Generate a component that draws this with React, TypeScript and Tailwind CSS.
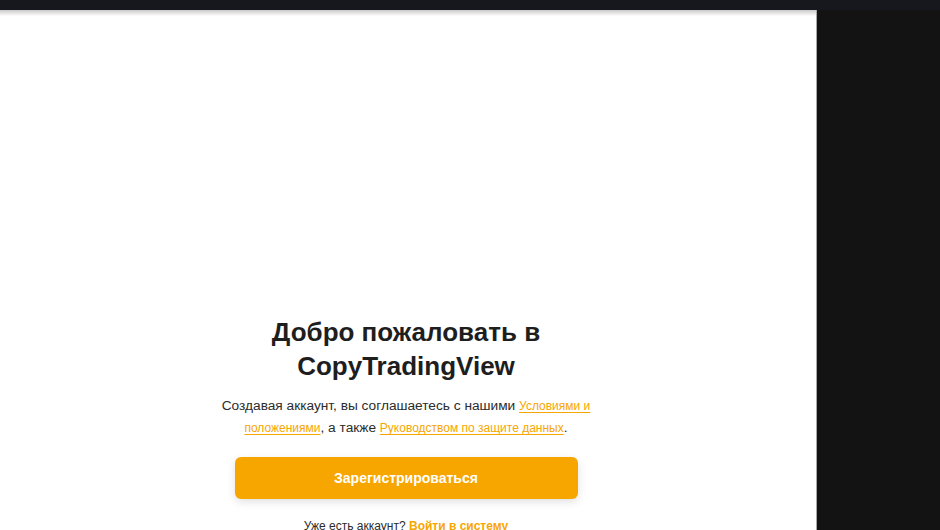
export default function App() {
  return (
    <div className="flex h-[530px] w-[940px] flex-col overflow-hidden bg-[#131313] font-['Liberation_Sans',Arial,sans-serif]">
      {/* top strip */}
      <div className="h-[10px] shrink-0 bg-[#17181e]" />
      <div className="flex min-h-0 flex-1">
        {/* sign-up panel */}
        <div className="relative w-[817px] shrink-0 border-r border-[#a8a8a8] bg-white">
          <div className="pointer-events-none absolute inset-x-0 top-0 h-[6px] bg-gradient-to-b from-[#c9c9c9] to-white/0" />
          <div className="flex flex-col items-center pr-[4px] pt-[305px] text-center">
            <h1 className="w-[360px] text-[26px] font-bold leading-[34px] text-[#1e1e1e]">
              Добро пожаловать в CopyTradingView
            </h1>
            <p className="mt-[12px] w-[376px] text-[13.7px] leading-[22px] text-[#2b2b2b]">
              Создавая аккаунт, вы соглашаетесь с нашими{" "}
              <a className="text-[12px] text-[#f7a600] underline underline-offset-2">Условиями и положениями</a>, а также{" "}
              <a className="text-[12px] text-[#f7a600] underline underline-offset-2">Руководством по защите данных</a>.
            </p>
            <button className="mt-[18px] h-[42px] w-[343px] rounded-[6px] bg-[#f7a600] text-[14px] font-bold text-white shadow-[0_3px_8px_rgba(0,0,0,0.12)]">
              Зарегистрироваться
            </button>
            <p className="mt-[19px] text-[12px] leading-[16px] text-[#2b2b2b]">
              Уже есть аккаунт? <a className="font-bold text-[#f7a600]">Войти в систему</a>
            </p>
          </div>
        </div>
        <div className="flex-1" />
      </div>
    </div>
  );
}
